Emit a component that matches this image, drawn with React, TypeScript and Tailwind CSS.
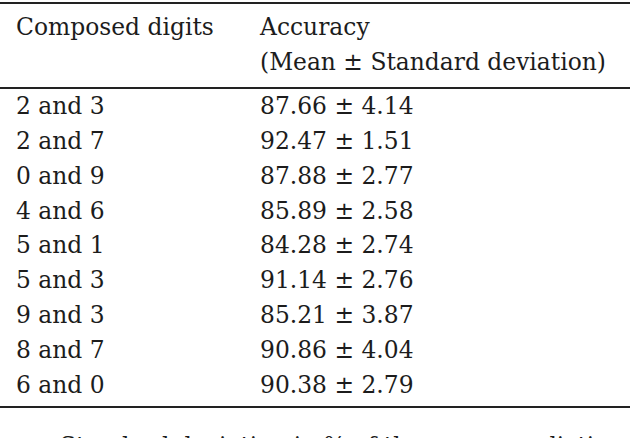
import React from "react";

const rows: [string, string][] = [
  ["2 and 3", "87.66 ± 4.14"],
  ["2 and 7", "92.47 ± 1.51"],
  ["0 and 9", "87.88 ± 2.77"],
  ["4 and 6", "85.89 ± 2.58"],
  ["5 and 1", "84.28 ± 2.74"],
  ["5 and 3", "91.14 ± 2.76"],
  ["9 and 3", "85.21 ± 3.87"],
  ["8 and 7", "90.86 ± 4.04"],
  ["6 and 0", "90.38 ± 2.79"],
];

const App = () => {
  return (
    <div className="h-[438px] w-[640px] overflow-hidden bg-white text-[#1c1c1c] font-['DejaVu_Serif',serif] text-[23.4px] leading-[34.9px]">
      <div className="mt-[2px] w-[630px] border-t-[2px] border-b-[2px] border-[#222]">
        <div className="grid grid-cols-[260px_1fr] pt-[6px] pb-[7px] border-b-[2px] border-[#222]">
          <div className="pl-4">Composed digits</div>
          <div>
            Accuracy
            <br />
            (Mean ± Standard deviation)
          </div>
        </div>
        <div className="pb-[3px]">
          {rows.map(([pair, acc]) => (
            <div key={pair} className="grid grid-cols-[260px_1fr]">
              <div className="pl-4">{pair}</div>
              <div>{acc}</div>
            </div>
          ))}
        </div>
      </div>
      <p className="mt-[21px] pl-[60px] whitespace-nowrap">
        Standard deviation in % of the mean prediction
      </p>
    </div>
  );
};

export default App;
